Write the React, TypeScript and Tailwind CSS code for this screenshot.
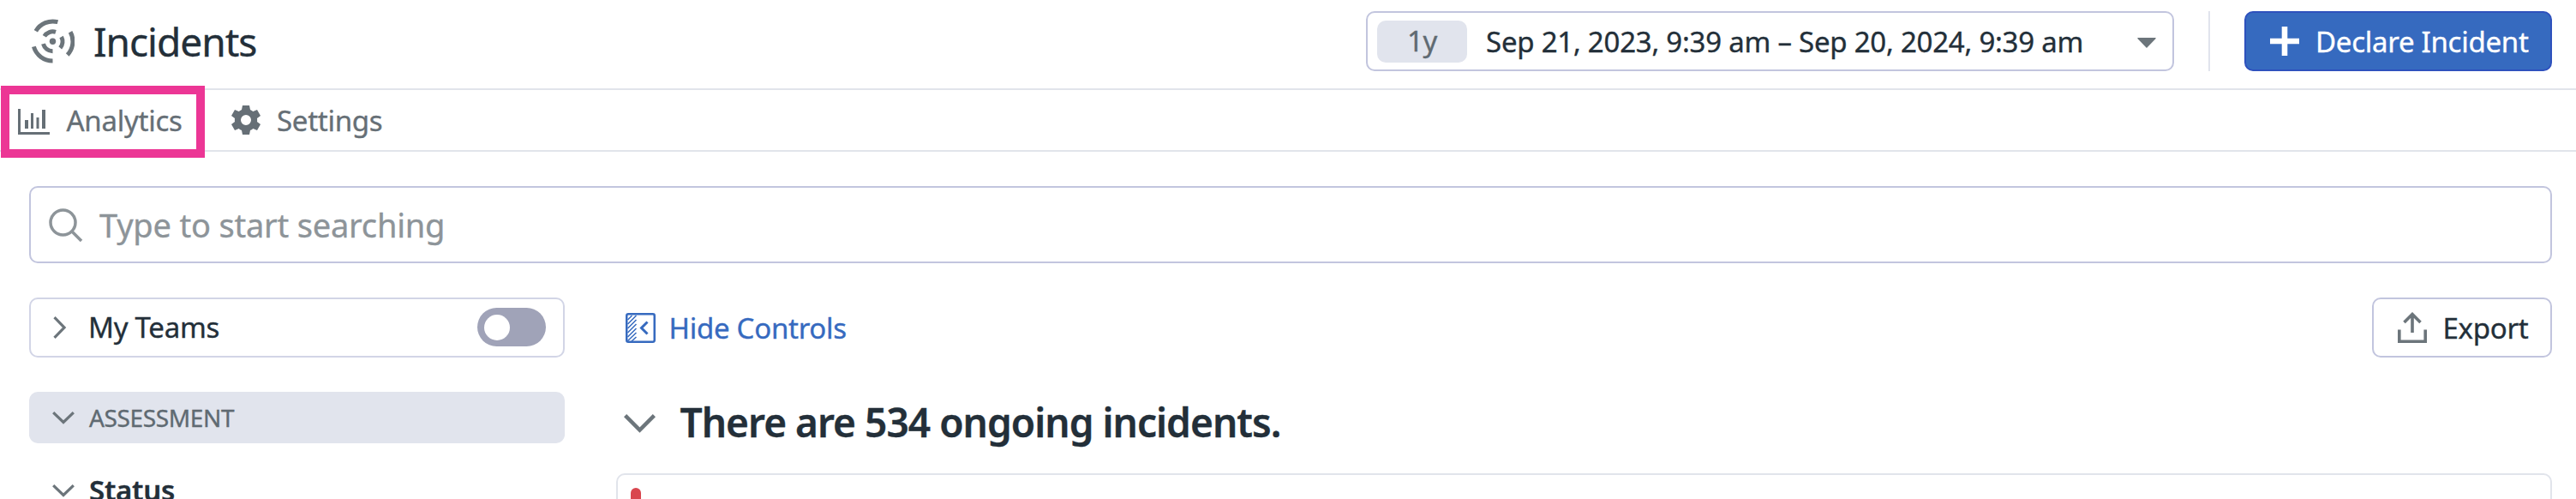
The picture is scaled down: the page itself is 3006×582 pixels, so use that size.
import React from "react";

const BORDER = "border-2 border-[#c2c5de]";

function IncidentsIcon() {
  return (
    <svg className="block" width="50" height="52" viewBox="0 0 50 52" fill="none" stroke="#6c757b" strokeWidth="5">
      <circle cx="24.5" cy="26.3" r="3.7" fill="#6c757b" stroke="none" />
      <path d="M30.4 3.7A22.8 22.8 0 0 0 4.8 14.3" />
      <path d="M2.400 32.4A22.8 22.8 0 0 0 24.5 49" />
      <path d="M45.100 15.3A22.8 22.8 0 0 1 41.700 42" />
      <path d="M28 15.400A11.400 11.400 0 0 0 14.800 20.300" />
      <path d="M13.500 29.200A11.400 11.400 0 0 0 24.500 37.700" />
      <path d="M34.600 21A11.400 11.400 0 0 1 33.200 33.900" />
    </svg>
  );
}

function Chevron({ className, w, h, d, sw }: { className?: string; w: number; h: number; d: string; sw: number }) {
  return (
    <svg className={className} width={w} height={h} viewBox={`0 0 ${w} ${h}`} fill="none" stroke="#6c757b" strokeWidth={sw}>
      <path d={d} />
    </svg>
  );
}

export default function App() {
  return (
    <div className="h-[582px] w-[3006px] overflow-hidden bg-white font-['Noto_Sans',sans-serif] text-[33px] leading-[45px] tracking-[-0.27px] text-[#232f39] [-webkit-text-stroke:0.35px]">
      <header className="flex h-[105px] items-start border-b-2 border-[#e1e4eb] pl-[37px] pr-[28px]">
        <div className="mt-[22px]">
          <IncidentsIcon />
        </div>
        <h1 className="ml-[22px] mt-[17px] text-[46px] leading-[62px] tracking-[-1px]">Incidents</h1>
        <div className={`ml-auto mt-[13px] flex h-[70px] w-[943px] items-center rounded-[10px] ${BORDER}`}>
          <div className="ml-[11px] mt-px flex h-[49px] w-[105px] items-center justify-center rounded-[10px] bg-[#e1e4ed] pb-[2px] text-[#5f6a72]">1y</div>
          <div className="ml-[22px] mt-px whitespace-nowrap tracking-[-0.24px]">Sep 21, 2023, 9:39 am – Sep 20, 2024, 9:39 am</div>
          <svg className="ml-auto mr-[19px] mt-[3px]" width="22" height="12" viewBox="0 0 22 12">
            <path d="M0.6 0H21.4Q22 0.6 21.4 1.2L11 12 .6 1.2Q0 .6 .6 0Z" fill="#6c757b" />
          </svg>
        </div>
        <div className="ml-[40px] mt-[13px] h-[70px] w-[2px] bg-[#e1e4ed]" />
        <button className="ml-[40px] mt-[13px] flex h-[70px] w-[359px] items-center rounded-[10px] border-2 border-[#2e51bd] bg-[#366abf] text-white">
          <svg className="ml-[28px]" width="34" height="34" viewBox="0 0 34 34" fill="#fff">
            <path d="M13.7 0h6.6v13.7H34v6.6H20.3V34h-6.6V20.3H0v-6.6h13.7z" />
          </svg>
          <span className="ml-[19px] mt-px whitespace-nowrap">Declare Incident</span>
        </button>
      </header>

      <nav className="flex h-[72px] border-b-2 border-[#e1e4eb] text-[#666f76]">
        <div className="-mt-[5px] ml-px flex h-[84px] w-[238px] shrink-0 items-center border-[10px] border-[#ec3695] bg-white">
          <svg className="ml-[10px]" width="37" height="30" viewBox="0 0 37 30" fill="#666f76">
            <path d="M0 0h3v27h34v3H0zM8 13h4v10H8zM15 5h3v18h-3zM21.500 10h3v13h-3zM28 1h4v22h-4z" />
          </svg>
          <span className="mb-[3px] ml-[19.5px]">Analytics</span>
        </div>
        <div className="flex h-[70px] items-center pl-[31px]">
          <svg width="34" height="34" viewBox="0 0 34 34">
            <g fill="#666f76" transform="translate(17 17)">
              <path fillRule="evenodd" d="M-4 -17H4L5 -12A13 13 0 0 1 8.300 -9.900L13 -12 17 -5 13 -2A13 13 0 0 1 13 2L17 5 13 12 8.300 9.900A13 13 0 0 1 5 12L4 17H-4L-5 12A13 13 0 0 1 -8.300 9.900L-13 12 -17 5 -13 2A13 13 0 0 1 -13 -2L-17 -5 -13 -12 -8.300 -9.900A13 13 0 0 1 -5 -12ZM6 0A6 6 0 1 0 -6 0A6 6 0 1 0 6 0Z" />
            </g>
          </svg>
          <span className="ml-[19px] mt-px">Settings</span>
        </div>
      </nav>

      <main className="pl-[34px] pr-[28px] pt-[40px]">
        <div className={`flex h-[90px] items-center rounded-[10px] ${BORDER}`}>
          <svg className="ml-[21px] mt-px" width="40" height="40" viewBox="0 0 40 40" fill="none" stroke="#8d9499" strokeWidth="3.5">
            <circle cx="16.500" cy="16.500" r="14.500" />
            <path d="M26.500 26.500L38 38" />
          </svg>
          <span className="ml-[19px] text-[38px] leading-[52px] tracking-[-0.2px] text-[#8d9499]">Type to start searching</span>
        </div>

        <div className="mt-[40px] flex">
          <aside className="w-[625px] shrink-0">
            <div className="flex h-[70px] items-center rounded-[10px] border-2 border-[#d2d5e6]">
              <Chevron className="ml-[26px]" w={16} h={26} sw={3.2} d="M1.500 1.200L13 13 1.500 24.800" />
              <span className="mb-px ml-[25px]">My Teams</span>
              <div className="mb-px ml-auto mr-[20px] flex h-[45px] w-[80px] items-center rounded-full bg-[#a0a3b8] pl-[8px]">
                <div className="size-[30px] rounded-full bg-white" />
              </div>
            </div>
            <div className="mt-[40px] flex h-[60px] items-center rounded-[10px] bg-[#e1e4ed] text-[28px] leading-[38px] tracking-[-0.36px] text-[#5f6a72]">
              <Chevron className="ml-[27px]" w={26} h={15} sw={3.2} d="M1.200 1.200L13 12.500 24.800 1.200" />
              <span className="ml-[17px]">ASSESSMENT</span>
            </div>
            <div className="mt-[32px] flex h-[45px] items-center font-semibold">
              <Chevron className="ml-[27px] mt-[2px]" w={26} h={15} sw={3.2} d="M1.200 1.200L13 12.500 24.800 1.200" />
              <span className="ml-[17px]">Status</span>
            </div>
          </aside>

          <section className="ml-[60px] flex-1">
            <div className="flex h-[70px] items-center pl-[11px]">
              <svg className="mt-px" width="35" height="35" viewBox="0 0 35 35" fill="none" stroke="#366abf">
                <rect x="1.250" y="1.250" width="32.500" height="32.500" rx="2" strokeWidth="2.500" />
                <path d="M2.500 8L7.500 3M2.500 13L12.500 3M2.500 18L12.500 8M2.500 23L12.500 13M2.500 28L12.500 18M2.500 32.500L12.500 23M7 33L12.500 28" strokeWidth="1.500" />
                <path d="M25.500 10.500L18.500 17.500 25.500 24.500" strokeWidth="3" />
              </svg>
              <span className="ml-[15.5px] mt-px text-[#366abf]">Hide Controls</span>
              <button className={`ml-auto flex h-[70px] w-[210px] items-center rounded-[10px] ${BORDER}`}>
                <svg className="mb-px ml-[28px]" width="34" height="36" viewBox="0 0 34 36" fill="none" stroke="#6c757b" strokeWidth="3.600">
                  <path d="M1.800 20.500V34.200H32.200V20.500M17 24V2.500M7.500 12L17 2.500 26.500 12" />
                </svg>
                <span className="ml-[18.5px] mt-px">Export</span>
              </button>
            </div>
            <div className="mt-[47px] flex h-[60px] items-center pl-[9px]">
              <Chevron w={37} h={22} sw={4.5} d="M1.600 1.600L18.500 18.500 35.400 1.600" />
              <h2 className="mb-[4px] ml-[28.5px] text-[46px] font-semibold leading-[62px] tracking-[-0.96px]">There are 534 ongoing incidents.</h2>
            </div>
            <div className="mt-[28px] h-[100px] rounded-[10px] border-2 border-[#e1e4eb] pl-[15px] pt-[15px]">
              <div className="h-[80px] w-[12px] rounded-full bg-[#d9464e]" />
            </div>
          </section>
        </div>
      </main>
    </div>
  );
}
